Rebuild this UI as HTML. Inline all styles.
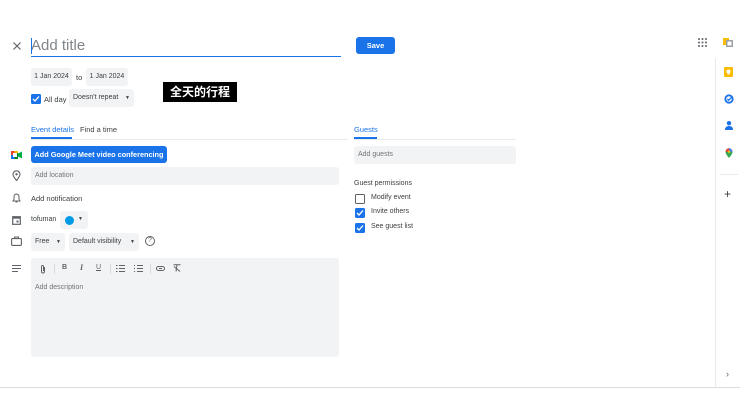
<!DOCTYPE html>
<html><head><meta charset="utf-8"><style>
*{margin:0;padding:0;box-sizing:border-box}
body{width:740px;height:416px;background:#fff;position:relative;overflow:hidden;font-family:"Liberation Sans","Noto Sans CJK SC",sans-serif;color:#3c4043}
.a{position:absolute}
.t{font-size:7.5px;color:#3c4043;white-space:nowrap}
.g{background:#f1f3f4;border-radius:3px}
.cb{position:absolute;width:10px;height:10px;border-radius:1.5px;background:#1a73e8}
.cb svg{position:absolute;left:0;top:0}
.cbo{position:absolute;width:10px;height:10px;border:1.5px solid #5f6368;border-radius:1.5px}
.tb{position:absolute;top:263px;font-size:8px;color:#5f6368;line-height:10px}
</style></head><body>
<svg class="a" style="left:13px;top:42px" width="8" height="8"><path d="M.5.5l7 7M7.5.5l-7 7" stroke="#5f6368" stroke-width="1.2"/></svg>
<div class="a" style="left:31px;top:37px;font-size:15px;color:#80868b">Add title</div>
<div class="a" style="left:31px;top:38px;width:1px;height:16px;background:#1a73e8"></div>
<div class="a" style="left:31px;top:56px;width:310px;height:1px;background:#1a73e8"></div>
<div class="a" style="left:356px;top:37px;width:39px;height:17px;background:#1a73e8;border-radius:3px;color:#fff;font-size:7.5px;font-weight:bold;text-align:center;line-height:17px">Save</div>

<div class="a g t" style="left:31px;top:68px;width:41px;height:18px;line-height:18px;text-align:center;font-size:7px">1 Jan 2024</div>
<div class="a t" style="left:76px;top:73px;font-size:7.5px">to</div>
<div class="a g t" style="left:86px;top:68px;width:42px;height:18px;line-height:18px;text-align:center;font-size:7px">1 Jan 2024</div>
<div class="cb" style="left:31px;top:94px"><svg width="10" height="10"><path d="M2 5l2 2 4-4.5" stroke="#fff" stroke-width="1.3" fill="none"/></svg></div>
<div class="a t" style="left:44px;top:95px;font-size:7.5px">All day</div>
<div class="a g t" style="left:69px;top:89px;width:65px;height:18px;line-height:18px;padding-left:4px;font-size:7px">Doesn't repeat <span style="position:absolute;right:4px;font-size:5px">▼</span></div>
<div class="a" style="left:163px;top:82px;width:74px;height:20px;background:#000;color:#fff;font-weight:bold;font-size:12px;line-height:20px;text-align:center">全天的行程</div>

<div class="a t" style="left:31px;top:125px;color:#1a73e8;font-size:7.5px">Event details</div>
<div class="a t" style="left:80px;top:125px;font-size:7.5px">Find a time</div>
<div class="a" style="left:31px;top:137px;width:41px;height:2px;background:#1a73e8"></div>
<div class="a" style="left:31px;top:139px;width:317px;height:1px;background:#e8eaed"></div>
<div class="a" style="left:354px;top:125px;color:#1a73e8;font-size:7.5px">Guests</div>
<div class="a" style="left:354px;top:137px;width:23px;height:2px;background:#1a73e8"></div>
<div class="a" style="left:354px;top:139px;width:162px;height:1px;background:#e8eaed"></div>

<svg class="a" style="left:11px;top:151px" width="11" height="8"><rect x="0" y="0" width="7" height="8" fill="#00832d"/><rect x="0" y="0" width="3.5" height="4" fill="#ea4335"/><rect x="3.5" y="0" width="3.5" height="2" fill="#fbbc04"/><rect x="0" y="4" width="3.5" height="4" fill="#1a73e8"/><path d="M7 2.5l4-2v7l-4-2z" fill="#00ac47"/><rect x="2" y="2" width="4" height="4" fill="#fff"/></svg>
<div class="a" style="left:31px;top:146px;width:136px;height:17px;background:#1a73e8;border-radius:3px;color:#fff;font-size:7.3px;font-weight:bold;text-align:center;line-height:17px">Add Google Meet video conferencing</div>
<svg class="a" style="left:12px;top:170px" width="9" height="11"><path d="M4.5 10.5C2 7.5 1 6 1 4.3a3.5 3.5 0 017 0C8 6 7 7.5 4.5 10.5z" fill="none" stroke="#5f6368" stroke-width="1.1"/><circle cx="4.5" cy="4.3" r="1.2" fill="#5f6368"/></svg>
<div class="a g t" style="left:31px;top:167px;width:308px;height:18px;line-height:18px;padding-left:4px;color:#70757a;font-size:7px">Add location</div>
<svg class="a" style="left:12px;top:193px" width="9" height="10"><path d="M4.5 1C2.5 1 2 2.7 2 4v2.5L1 8h7L7 6.5V4C7 2.7 6.5 1 4.5 1zM3.5 9h2" fill="none" stroke="#5f6368" stroke-width="1"/></svg>
<div class="a t" style="left:31px;top:194px;font-size:7.5px">Add notification</div>
<svg class="a" style="left:12px;top:215px" width="9" height="10"><rect x="0.7" y="1.7" width="7.6" height="7.6" fill="none" stroke="#5f6368" stroke-width="1.2"/><rect x="0.7" y="1.7" width="7.6" height="2" fill="#5f6368"/><rect x="4.5" y="5.5" width="2" height="2" fill="#5f6368"/></svg>
<div class="a t" style="left:31px;top:216px;font-size:7px">tofuman</div>
<div class="a g" style="left:60px;top:211px;width:28px;height:18px"><div class="a" style="left:5px;top:5px;width:9px;height:9px;border-radius:50%;background:#039be5"></div><span class="a" style="left:18px;top:5px;font-size:5px">▼</span></div>
<svg class="a" style="left:11px;top:236px" width="11" height="10"><rect x="0.6" y="2.6" width="9.8" height="6.8" rx="1" fill="none" stroke="#5f6368" stroke-width="1.1"/><path d="M3.5 2.6V1h4v1.6" fill="none" stroke="#5f6368" stroke-width="1.1"/></svg>
<div class="a g t" style="left:31px;top:233px;width:34px;height:18px;line-height:18px;padding-left:4px;font-size:7px">Free<span style="position:absolute;right:4px;font-size:5px">▼</span></div>
<div class="a g t" style="left:69px;top:233px;width:70px;height:18px;line-height:18px;padding-left:4px;font-size:7px">Default visibility<span style="position:absolute;right:4px;font-size:5px">▼</span></div>
<div class="a" style="left:145px;top:236px;width:10px;height:10px;border:1.1px solid #5f6368;border-radius:50%;font-size:7px;line-height:8px;text-align:center;color:#5f6368">?</div>
<svg class="a" style="left:12px;top:265px" width="9" height="7"><path d="M0 .5h9M0 3.5h9M0 6.5h6" stroke="#5f6368" stroke-width="1"/></svg>
<div class="a g" style="left:31px;top:258px;width:308px;height:99px"></div>
<div class="a t" style="left:35px;top:284px;color:#70757a;font-size:7px">Add description</div>
<svg class="a" style="left:40px;top:264px" width="6" height="10"><path d="M4.5 3v4.5a1.5 1.5 0 01-3 0V2.5a1 1 0 012 0V7" fill="none" stroke="#5f6368" stroke-width="1"/></svg>
<div class="tb" style="left:62px;font-weight:bold;font-size:7px">B</div>
<div class="tb" style="left:80px;font-style:italic;font-family:'Liberation Serif';font-weight:bold">I</div>
<div class="tb" style="left:96px;text-decoration:underline;font-size:7px">U</div>
<svg class="a" style="left:116px;top:265px" width="9" height="7"><path d="M3 .5h6M3 3.5h6M3 6.5h6M0 .5h1.5M0 3.5h1.5M0 6.5h1.5" stroke="#5f6368" stroke-width="1"/></svg>
<svg class="a" style="left:134px;top:265px" width="9" height="7"><path d="M3 .5h6M3 3.5h6M3 6.5h6M0 .5h1M0 3.5h1M0 6.5h1" stroke="#5f6368" stroke-width="1"/></svg>
<svg class="a" style="left:156px;top:266px" width="9" height="5"><rect x=".5" y=".5" width="8" height="4" rx="2" fill="none" stroke="#5f6368" stroke-width="1"/><path d="M3 2.5h3" stroke="#5f6368"/></svg>
<svg class="a" style="left:173px;top:264px" width="8" height="8"><path d="M.5.7h7M4 .7L3 7.5M1 2.5l6 5" stroke="#5f6368" stroke-width="1"/></svg>
<div class="a" style="left:54px;top:264px;width:1px;height:10px;background:#dadce0"></div>
<div class="a" style="left:110px;top:264px;width:1px;height:10px;background:#dadce0"></div>
<div class="a" style="left:150px;top:264px;width:1px;height:10px;background:#dadce0"></div>

<div class="a g t" style="left:354px;top:146px;width:162px;height:18px;line-height:18px;padding-left:4px;color:#70757a;font-size:7px">Add guests</div>
<div class="a t" style="left:354px;top:180px;font-size:7px">Guest permissions</div>
<div class="cbo" style="left:355px;top:194px"></div>
<div class="a t" style="left:371px;top:194px;font-size:7px">Modify event</div>
<div class="cb" style="left:355px;top:208px"><svg width="10" height="10"><path d="M2 5l2 2 4-4.5" stroke="#fff" stroke-width="1.3" fill="none"/></svg></div>
<div class="a t" style="left:371px;top:208px;font-size:7px">Invite others</div>
<div class="cb" style="left:355px;top:223px"><svg width="10" height="10"><path d="M2 5l2 2 4-4.5" stroke="#fff" stroke-width="1.3" fill="none"/></svg></div>
<div class="a t" style="left:371px;top:223px;font-size:7px">See guest list</div>

<svg class="a" style="left:698px;top:38px" width="9" height="9"><g fill="#5f6368"><circle cx="1" cy="1" r="1"/><circle cx="4.5" cy="1" r="1"/><circle cx="8" cy="1" r="1"/><circle cx="1" cy="4.5" r="1"/><circle cx="4.5" cy="4.5" r="1"/><circle cx="8" cy="4.5" r="1"/><circle cx="1" cy="8" r="1"/><circle cx="4.5" cy="8" r="1"/><circle cx="8" cy="8" r="1"/></g></svg>
<svg class="a" style="left:723px;top:38px" width="10" height="9"><rect x="0" y="0" width="6" height="7" fill="#fbbc04"/><rect x="3" y="2" width="7" height="7" fill="#9aa0a6"/><rect x="4.5" y="3.5" width="4" height="4" fill="#fff"/></svg>
<div class="a" style="left:715px;top:58px;width:1px;height:329px;background:#e8eaed"></div>
<svg class="a" style="left:724px;top:67px" width="9" height="10"><rect width="9" height="10" rx="1" fill="#fbbc04"/><circle cx="4.5" cy="4.5" r="2" fill="#fff"/><rect x="3.5" y="6" width="2" height="1.5" fill="#fff"/></svg>
<svg class="a" style="left:724px;top:94px" width="10" height="10"><circle cx="5" cy="5" r="3.7" fill="none" stroke="#1a73e8" stroke-width="1.8"/><path d="M3.3 5l1.3 1.3 3-3" stroke="#1a73e8" stroke-width="1.3" fill="none"/></svg>
<svg class="a" style="left:725px;top:121px" width="8" height="9"><circle cx="4" cy="2.2" r="2.2" fill="#1a73e8"/><path d="M0 9c0-3 1.5-4 4-4s4 1 4 4z" fill="#1a73e8"/></svg>
<svg class="a" style="left:725px;top:148px" width="8" height="10"><path d="M4 10C1.5 7 .5 5.5.5 3.8a3.5 3.5 0 017 0C7.5 5.5 6.5 7 4 10z" fill="#34a853"/><path d="M.5 3.8a3.5 3.5 0 017 0z" fill="#ea4335"/><path d="M4 .3a3.5 3.5 0 013.5 3.5H4z" fill="#4285f4"/><circle cx="4" cy="3.8" r="1.2" fill="#fbbc04"/></svg>
<div class="a" style="left:720px;top:174px;width:18px;height:1px;background:#e8eaed"></div>
<div class="a" style="left:724px;top:188px;font-size:12px;color:#3c4043;line-height:12px">+</div>
<div class="a" style="left:726px;top:369px;font-size:9px;color:#5f6368">›</div>
<div class="a" style="left:0;top:387px;width:740px;height:1px;background:#dadce0"></div>
</body></html>
